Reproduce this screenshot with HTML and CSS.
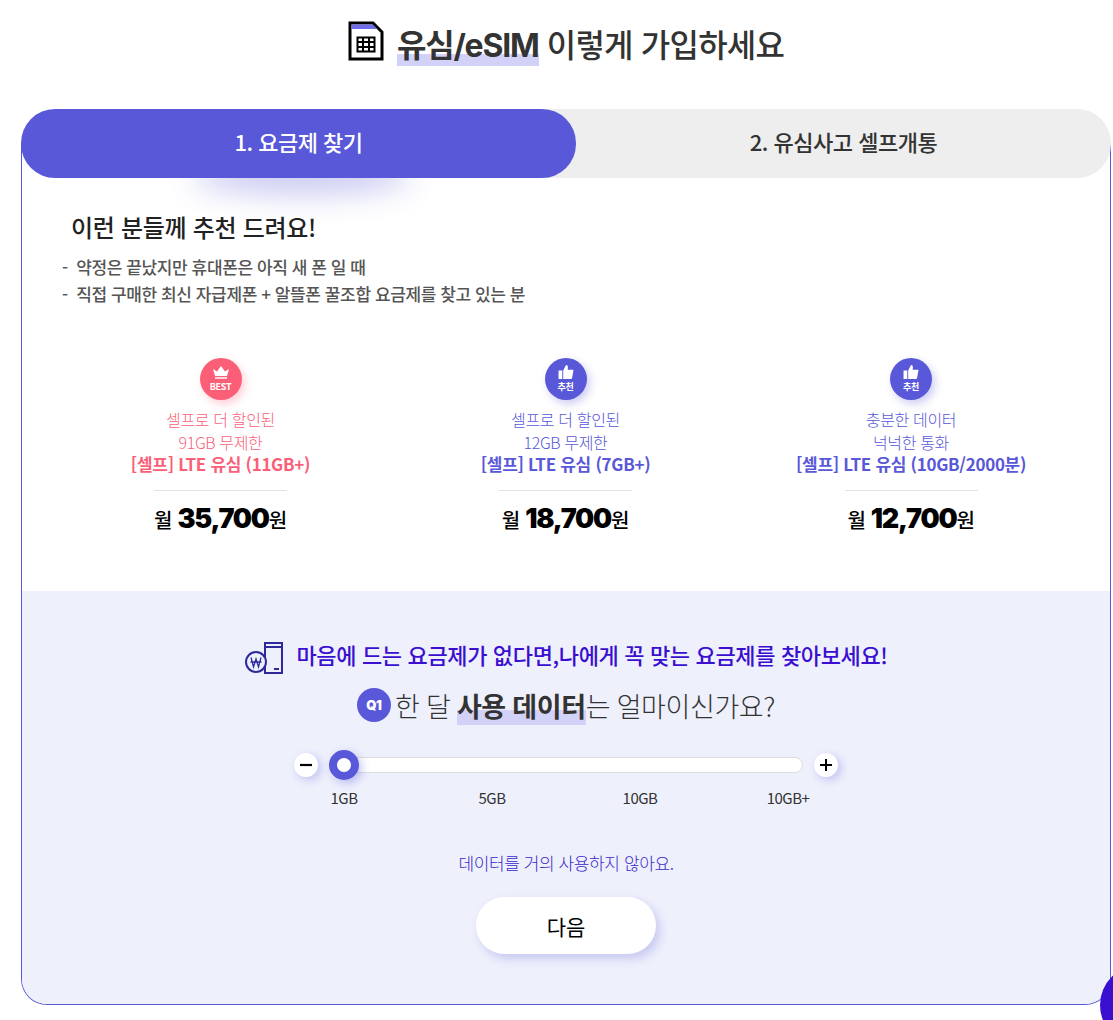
FILE: index.html
```html
<!DOCTYPE html>
<html lang="ko">
<head>
    <meta charset="UTF-8">
    <title>유심/eSIM 이렇게 가입하세요</title>
    <link rel="stylesheet" href="styles.css">
</head>
<body>
    <div class="content">
        <h1 class="title">
            <svg class="sim_icon" width="36" height="40" viewBox="0 0 36 40">
                <path d="M2 2H25L34 11V38H2Z" fill="#fff" stroke="#000" stroke-width="3"/>
                <path d="M3.500 3.500H24.500L29 8H3.500Z" fill="#6f6ce8"/>
                <path d="M9.500 16.500H26.500V30.500H9.500Z" fill="none" stroke="#000" stroke-width="2"/>
                <path d="M9 21H27M9 26H27M15 16V31M21 16V31" stroke="#000" stroke-width="2"/>
            </svg>
            <span class="title_text"><b class="mark">유심/eSIM</b> 이렇게 가입하세요</span>
        </h1>

        <div class="tabs">
            <div class="tab tab_on">1. 요금제 찾기</div>
            <div class="tab tab_off">2. 유심사고 셀프개통</div>
        </div>

        <div class="panel">
            <div class="intro">
                <h2>이런 분들께 추천 드려요!</h2>
                <p>-&nbsp; 약정은 끝났지만 휴대폰은 아직 새 폰 일 때</p>
                <p>-&nbsp; 직접 구매한 최신 자급제폰 + 알뜰폰 꿀조합 요금제를 찾고 있는 분</p>
            </div>

            <div class="plans">
                <div class="plan plan_best">
                    <div class="badge">
                        <svg width="18" height="14" viewBox="0 0 18 14"><path d="M3 11 1 4l4 2.500L9 1l4 5.500L17 4l-2 7Z" fill="#fff"/><path d="M3 13H15" stroke="#fff" stroke-width="1.500"/></svg>
                        <span>BEST</span>
                    </div>
                    <p>셀프로 더 할인된</p>
                    <p>91GB 무제한</p>
                    <p class="plan_name">[셀프] LTE 유심 (11GB+)</p>
                    <div class="price">월 <b>35,700</b>원</div>
                </div>
                <div class="plan">
                    <div class="badge">
                        <svg width="16" height="14" viewBox="0 0 16 15"><path d="M0 6H4V15H0ZM5 6 8 0C10 0 10.500 2 9.800 5H15.500C16 5 16 6 15.800 7L14.500 14C14.300 15 14 15 13 15H5Z" fill="#fff"/></svg>
                        <span>추천</span>
                    </div>
                    <p>셀프로 더 할인된</p>
                    <p>12GB 무제한</p>
                    <p class="plan_name">[셀프] LTE 유심 (7GB+)</p>
                    <div class="price">월 <b>18,700</b>원</div>
                </div>
                <div class="plan">
                    <div class="badge">
                        <svg width="16" height="14" viewBox="0 0 16 15"><path d="M0 6H4V15H0ZM5 6 8 0C10 0 10.500 2 9.800 5H15.500C16 5 16 6 15.800 7L14.500 14C14.300 15 14 15 13 15H5Z" fill="#fff"/></svg>
                        <span>추천</span>
                    </div>
                    <p>충분한 데이터</p>
                    <p>넉넉한 통화</p>
                    <p class="plan_name">[셀프] LTE 유심 (10GB/2000분)</p>
                    <div class="price">월 <b>12,700</b>원</div>
                </div>
            </div>

            <div class="finder">
                <div class="finder_head">
                    <svg class="won_icon" width="38" height="34" viewBox="0 0 38 34" fill="none" stroke="#2f2a9c" stroke-width="2">
                        <path d="M20 2H37V32H20V2ZM20 6H37M29 28H34"/>
                        <circle cx="11" cy="21" r="10" fill="#eef0fc"/>
                        <path d="M6 16.500 8.500 26 11 18 13.500 26 16 16.500M5.500 21H16.500" stroke-width="1.300"/>
                    </svg>
                    <span>마음에 드는 요금제가 없다면,나에게 꼭 맞는 요금제를 찾아보세요!</span>
                </div>
                <div class="question">
                    <i class="q_no">Q1</i>
                    <span>한 달 <b class="mark">사용 데이터</b>는 얼마이신가요?</span>
                </div>

                <div class="slider">
                    <button class="step">
                        <svg width="12" height="12" viewBox="0 0 12 12"><path d="M0 6H12" stroke="#000" stroke-width="2.200"/></svg>
                    </button>
                    <div class="track"><i class="thumb"></i></div>
                    <button class="step">
                        <svg width="12" height="12" viewBox="0 0 12 12"><path d="M0 6H12M6 0V12" stroke="#000" stroke-width="2"/></svg>
                    </button>
                </div>
                <div class="ticks">
                    <span>1GB</span>
                    <span>5GB</span>
                    <span>10GB</span>
                    <span>10GB+</span>
                </div>

                <p class="answer">데이터를 거의 사용하지 않아요.</p>
                <button class="next">다음</button>
            </div>
        </div>
    </div>
    <div class="chat"><i></i></div>
</body>
</html>
```

FILE: styles.css
```css
*{
    margin: 0;
    padding: 0;
    box-sizing: border-box;
}
html, body{
    height: 1020px;
    overflow: hidden;
    background-color: #fff;
}
body{
    position: relative;
    font-family: "Noto Sans CJK KR", "Noto Sans", sans-serif;
    color: #333;
}
.content{
    padding: 0 2px 0 21px;
}
/* 상단 제목 */
.title{
    height: 109px;
    padding: 21px 0 0 0;
    display: flex;
    justify-content: center;
    align-items: flex-start;
    gap: 13px;
    font-size: 32px;
    font-weight: 500;
    line-height: 46px;
    letter-spacing: -0.8px;
}
.sim_icon{
    display: block;
}
.title .title_text{
    display: block;
    margin-top: -1px;
}
.mark{
    font-weight: 700;
    background: linear-gradient(transparent 62%, #d2d1f7 62%, #d2d1f7 100%);
}
.title .mark{
    display: inline-block;
    height: 43px;
    font-family: Inter, "Noto Sans CJK KR", sans-serif;
    letter-spacing: -1.2px;
    background: linear-gradient(transparent 72%, #d2d1f7 72%, #d2d1f7 100%);
}
/* 탭 */
.tabs{
    display: flex;
    height: 69px;
    position: relative;
    z-index: 1;
}
.tab{
    text-align: center;
    font-size: 22px;
    font-weight: 500;
    line-height: 65px;
    letter-spacing: -0.5px;
}
.tab_on{
    flex: 0 0 555px;
    color: #fff;
    background-color: #5858d8;
    border-radius: 34px;
    position: relative;
}
.tab_off{
    flex: 1;
    margin-left: -34px;
    padding-left: 34px;
    background-color: #eee;
    border-radius: 0 34px 34px 0;
}
/* 본문 */
.panel{
    position: relative;
    margin-top: -34px;
    padding-top: 34px;
    border: 1px solid #5858d8;
    border-top: 0;
    border-radius: 0 0 26px 26px;
    overflow: hidden;
    background-color: #fff;
}
.panel::before{
    content: "";
    position: absolute;
    left: 175px;
    top: 0;
    width: 210px;
    height: 30px;
    border-radius: 50%;
    box-shadow: 0 16px 30px 4px rgba(88, 88, 216, 0.32);
}
.intro{
    position: relative;
    padding: 29px 0 0 40px;
    height: 157px;
}
.intro h2{
    margin: 0 0 6px 9px;
    font-size: 24px;
    font-weight: 500;
    line-height: 40px;
    letter-spacing: -0.3px;
    color: #222;
}
.intro p{
    font-size: 17px;
    font-weight: 500;
    line-height: 27px;
    letter-spacing: -0.35px;
    word-spacing: -0.2px;
    color: #555;
}
.plans{
    display: grid;
    grid-template-columns: 397px 293px 398px;
    height: 256px;
    padding: 23px 0 0;
}
.plan{
    display: flex;
    flex-direction: column;
    align-items: center;
    font-size: 16px;
    line-height: 22.5px;
    font-weight: 300;
    letter-spacing: -0.35px;
    color: #5858d8;
}
.badge{
    width: 42px;
    height: 42px;
    margin-bottom: 8px;
    border-radius: 50%;
    background-color: #5858d8;
    box-shadow: 3px 4px 8px rgba(88, 88, 216, 0.3);
    display: flex;
    flex-direction: column;
    align-items: center;
    padding-top: 7px;
    color: #fff;
    font-size: 9px;
    font-weight: 700;
    line-height: 11px;
    letter-spacing: -0.3px;
}
.badge svg{
    display: block;
    margin-bottom: 2px;
}
.plan_best{
    color: #fb5f78;
}
.plan_best .badge{
    background-color: #fb5f78;
    box-shadow: 3px 4px 8px rgba(251, 95, 120, 0.3);
}
.plan_name{
    font-size: 17px;
    font-weight: 700;
    letter-spacing: -0.3px;
    white-space: nowrap;
}
.price{
    width: 133px;
    margin-top: 14px;
    padding-top: 9px;
    border-top: 1px solid #e2e2e2;
    text-align: center;
    white-space: nowrap;
    font-size: 20px;
    font-weight: 500;
    line-height: 38px;
    color: #000;
}
.plan .price b{
    font-family: Inter, "Noto Sans CJK KR", sans-serif;
    font-size: 27px;
    font-weight: 900;
    letter-spacing: -1.2px;
}
/* 요금제 찾기 */
.finder{
    height: 413px;
    padding-top: 45px;
    background-color: #eef0fc;
    display: flex;
    flex-direction: column;
    align-items: center;
}
.finder_head{
    display: flex;
    align-items: center;
    gap: 13px;
    height: 36px;
    margin-left: 1px;
    color: #3a0fd0;
    font-size: 22px;
    font-weight: 500;
    letter-spacing: -0.35px;
}
.won_icon{
    margin-top: 8px;
}
.question{
    display: flex;
    align-items: center;
    gap: 4px;
    height: 44px;
    margin: 11px 0 0 0;
    font-size: 27px;
    font-weight: 300;
    letter-spacing: -0.4px;
    word-spacing: -0.6px;
}
.q_no{
    width: 34px;
    height: 34px;
    border-radius: 50%;
    background-color: #5858d8;
    color: #fff;
    font-family: Inter, sans-serif;
    font-size: 13px;
    font-weight: 900;
    font-style: normal;
    line-height: 34px;
    text-align: center;
}
.slider{
    display: flex;
    align-items: center;
    margin: 23px 0 0 0;
    height: 30px;
}
.step{
    display: flex;
    align-items: center;
    justify-content: center;
    width: 24px;
    height: 24px;
    border: 0;
    border-radius: 50%;
    background-color: #fff;
    box-shadow: 3px 3px 8px rgba(88, 88, 216, 0.3);
}
.track{
    position: relative;
    width: 474px;
    height: 16px;
    margin: 0 11px;
    background-color: #fff;
    border: 1px solid #dcdcdc;
    border-radius: 8px;
}
.thumb{
    position: absolute;
    left: -1px;
    top: -8px;
    width: 30px;
    height: 30px;
    border: 8px solid #5858d8;
    border-radius: 50%;
    background-color: #fff;
    box-shadow: 3px 3px 8px rgba(88, 88, 216, 0.35);
}
.ticks{
    display: grid;
    grid-template-columns: repeat(4, 148px);
    margin-top: 6px;
    text-align: center;
    font-size: 15px;
    font-weight: 400;
    line-height: 24px;
    letter-spacing: -0.5px;
}
.answer{
    margin-top: 41px;
    color: #3a28c8;
    font-size: 17px;
    font-weight: 300;
    line-height: 24px;
    letter-spacing: -0.4px;
}
.next{
    width: 180px;
    height: 57px;
    margin-top: 22px;
    border: 0;
    border-radius: 29px;
    background-color: #fff;
    box-shadow: 4px 5px 10px rgba(88, 88, 216, 0.25);
    color: #000;
    font-family: "Noto Sans CJK KR", sans-serif;
    font-size: 21px;
    font-weight: 400;
}
/* 우측 하단 채팅 버튼 */
.chat{
    position: absolute;
    left: 1100px;
    top: 960px;
    width: 13px;
    height: 60px;
    overflow: hidden;
}
.chat i{
    display: block;
    width: 80px;
    height: 80px;
    margin-top: 5px;
    border-radius: 50%;
    background-color: #3a0fd0;
}
```
